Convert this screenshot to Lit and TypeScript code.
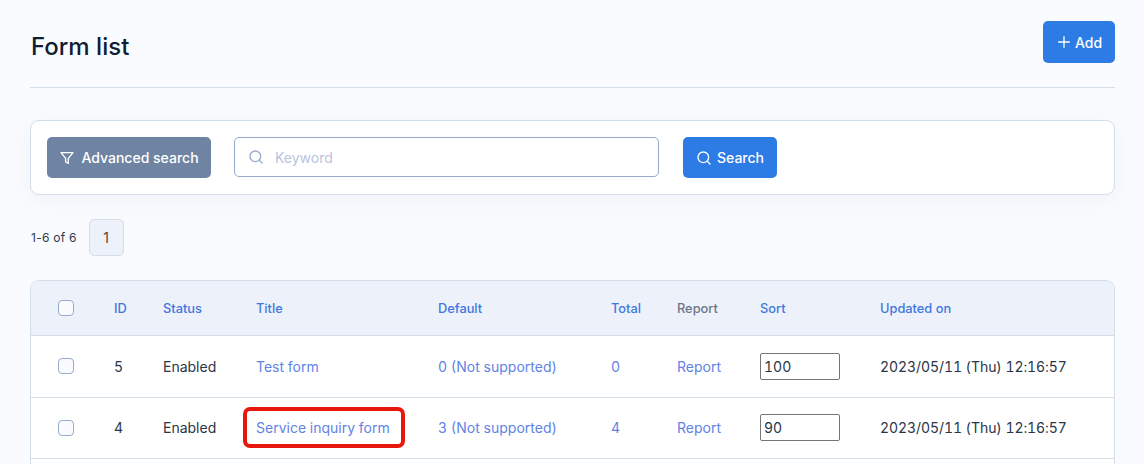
import { html, css, LitElement } from 'lit';
import { customElement } from 'lit/decorators.js';

const rows = [
  { id: 5, status: 'Enabled', title: 'Test form', def: '0 (Not supported)', total: 0, sort: 100, updated: '2023/05/11 (Thu) 12:16:57', marked: false },
  { id: 4, status: 'Enabled', title: 'Service inquiry form', def: '3 (Not supported)', total: 4, sort: 90, updated: '2023/05/11 (Thu) 12:16:57', marked: true },
];

const searchIcon = html`<svg viewBox="0 0 24 24" width="16" height="16" fill="none" stroke="currentColor" stroke-width="2" stroke-linecap="round" stroke-linejoin="round"><circle cx="11" cy="11" r="8"></circle><path d="M21 21l-4.3-4.3"></path></svg>`;

@customElement('app-root')
export class AppRoot extends LitElement {
  render() {
    return html`
      <header class="head">
        <h1>Form list</h1>
        <button class="btn add">
          <svg viewBox="0 0 24 24" width="16" height="16" fill="none" stroke="currentColor" stroke-width="2" stroke-linecap="round"><path d="M12 4v16M4 12h16"></path></svg>
          Add
        </button>
      </header>

      <section class="card">
        <button class="btn muted">
          <svg viewBox="0 0 24 24" width="16" height="16" fill="none" stroke="currentColor" stroke-width="2" stroke-linejoin="round"><path d="M3 4h18l-7 8.5V20l-4-2v-5.5z"></path></svg>
          Advanced search
        </button>
        <label class="keyword">
          ${searchIcon}
          <input placeholder="Keyword" />
        </label>
        <button class="btn search">${searchIcon} Search</button>
      </section>

      <div class="pager">
        <span>1-6 of 6</span>
        <span class="page">1</span>
      </div>

      <div class="table-wrap">
        <table>
          <colgroup>
            <col class="c-check" /><col class="c-id" /><col class="c-status" /><col class="c-title" />
            <col class="c-default" /><col class="c-total" /><col class="c-report" /><col class="c-sort" /><col />
          </colgroup>
          <thead>
            <tr>
              <th class="check"><span class="box"></span></th>
              <th>ID</th>
              <th>Status</th>
              <th>Title</th>
              <th>Default</th>
              <th>Total</th>
              <th class="plain">Report</th>
              <th>Sort</th>
              <th>Updated on</th>
            </tr>
          </thead>
          <tbody>
            ${rows.map(
              (r) => html`
                <tr>
                  <td class="check"><span class="box"></span></td>
                  <td>${r.id}</td>
                  <td>${r.status}</td>
                  <td><a class=${r.marked ? 'marked' : ''}>${r.title}</a></td>
                  <td><a>${r.def}</a></td>
                  <td><a>${r.total}</a></td>
                  <td><a>Report</a></td>
                  <td><input class="sort" .value=${String(r.sort)} /></td>
                  <td class="date">${r.updated}</td>
                </tr>
              `,
            )}
          </tbody>
        </table>
      </div>
    `;
  }

  static styles = css`
    :host {
      display: block;
      box-sizing: border-box;
      height: 464px;
      overflow: hidden;
      padding: 21px 29px 0 30px;
      background: #fafbfe;
      color: #2a3547;
      font-family: Inter, 'Liberation Sans', sans-serif;
      font-size: 14px;
      font-variant-numeric: tabular-nums;
    }

    .head {
      display: flex;
      justify-content: space-between;
      align-items: flex-start;
      height: 66px;
      border-bottom: 1px solid #d3deeb;
    }

    h1 {
      margin: 11px 0 0 1px;
      color: #101d33;
      font-size: 24px;
      line-height: 30px;
      font-weight: 500;
    }

    .btn {
      display: inline-flex;
      align-items: center;
      justify-content: center;
      gap: 5px;
      box-sizing: border-box;
      height: 41px;
      padding: 0;
      border: 0;
      border-radius: 5px;
      color: #fff;
      background: #2d7be5;
      font: inherit;
      font-weight: 500;
    }

    .add {
      width: 72px;
      height: 42px;
      gap: 3px;
    }

    .muted {
      width: 164px;
      gap: 6px;
      background: #6f84a2;
    }

    .search {
      width: 94px;
      margin-left: 24px;
    }

    .card {
      display: flex;
      align-items: flex-start;
      box-sizing: border-box;
      height: 75px;
      margin-top: 32px;
      padding: 16px;
      border: 1px solid #d3deeb;
      border-radius: 9px;
      background: #fff;
      box-shadow: 0 6px 20px rgba(120, 140, 180, 0.08);
    }

    .keyword {
      display: flex;
      align-items: center;
      gap: 11px;
      box-sizing: border-box;
      width: 425px;
      height: 40px;
      margin-left: 23px;
      padding-left: 13px;
      border: 1px solid #96aaca;
      border-radius: 5px;
      color: #96aaca;
    }

    .keyword input {
      flex: 1;
      min-width: 0;
      border: 0;
      outline: 0;
      padding: 0;
      background: transparent;
      font: inherit;
    }

    .keyword input::placeholder {
      color: #b9c4de;
    }

    .pager {
      display: flex;
      align-items: center;
      gap: 12px;
      margin-top: 24px;
      padding-left: 1px;
      color: #2c3a50;
      font-size: 12px;
      font-variant-numeric: normal;
      letter-spacing: 0.25px;
    }

    .page {
      display: flex;
      align-items: center;
      justify-content: center;
      width: 35px;
      height: 37px;
      box-sizing: border-box;
      border: 1px solid #d3deeb;
      border-radius: 5px;
      background: #edf1f9;
      color: #6b3b2a;
      font-size: 14px;
    }

    .table-wrap {
      margin-top: 24px;
      padding-bottom: 60px;
      border: 1px solid #d3deeb;
      border-radius: 9px;
      background: #fff;
      overflow: hidden;
    }

    table {
      width: 100%;
      table-layout: fixed;
      border-collapse: collapse;
    }

    .c-check { width: 71px; }
    .c-id { width: 49px; }
    .c-status { width: 93px; }
    .c-title { width: 182px; }
    .c-default { width: 173px; }
    .c-total { width: 66px; }
    .c-report { width: 83px; }
    .c-sort { width: 120px; }

    th,
    td {
      padding: 0 12px;
      text-align: left;
      white-space: nowrap;
      border-bottom: 1px solid #d3deeb;
    }

    th {
      height: 54px;
      background: #edf1f9;
      color: #3f78e0;
      font-size: 12.8px;
      font-weight: 500;
    }

    th.plain {
      color: #6c7686;
    }

    td {
      height: 60.5px;
    }

    .date {
      letter-spacing: -0.08px;
    }

    .check {
      padding: 0 0 0 27px;
    }

    .box {
      display: block;
      box-sizing: border-box;
      width: 16px;
      height: 16px;
      border: 1px solid #96aaca;
      border-radius: 4px;
      background: #fafbfe;
    }

    a {
      color: #5f83e6;
      position: relative;
    }

    /* red annotation around the row the screenshot points at */
    a.marked::after {
      content: '';
      position: absolute;
      top: -12px;
      bottom: -12px;
      left: -13px;
      right: -15px;
      border: 4px solid #e8170c;
      border-radius: 7px;
    }

    .sort {
      display: block;
      box-sizing: border-box;
      width: 80px;
      height: 27px;
      padding: 1px 3px;
      border: 1px solid #767676;
      border-radius: 2px;
      color: #2a3547;
      font: inherit;
    }
  `;
}
